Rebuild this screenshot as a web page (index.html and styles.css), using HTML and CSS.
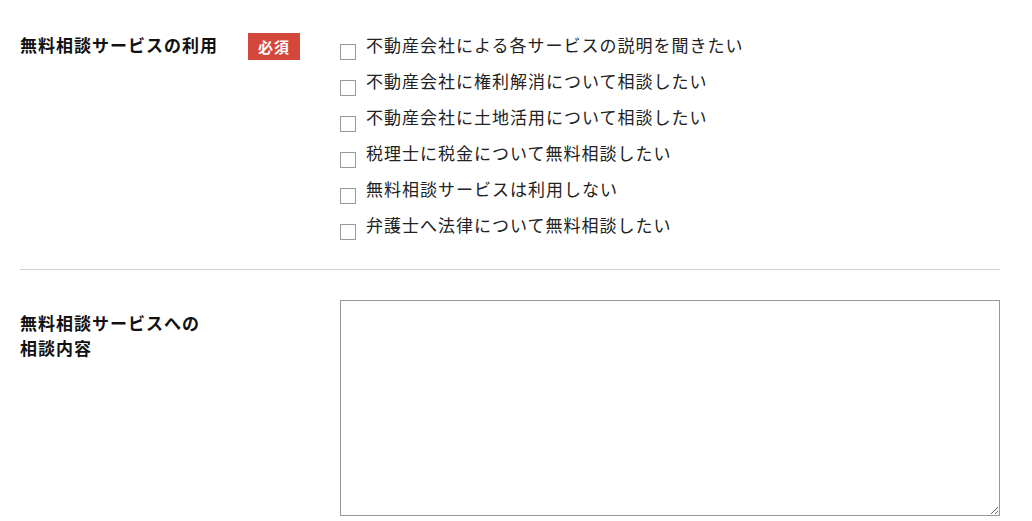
FILE: index.html
```html
<!DOCTYPE html>
<html lang="ja">
<head>
  <meta charset="UTF-8" />
  <meta name="viewport" content="width=device-width, initial-scale=1.0"/>
  <title>無料相談サービス</title>
  <link rel="stylesheet" href="styles.css">
</head>
<body>
  <form class="form">
    <div class="row row-first">
      <div class="label">無料相談サービスの利用</div>
      <span class="required">必須</span>
      <div class="options">
        <label class="option"><input type="checkbox" /><span>不動産会社による各サービスの説明を聞きたい</span></label>
        <label class="option"><input type="checkbox" /><span>不動産会社に権利解消について相談したい</span></label>
        <label class="option"><input type="checkbox" /><span>不動産会社に土地活用について相談したい</span></label>
        <label class="option"><input type="checkbox" /><span>税理士に税金について無料相談したい</span></label>
        <label class="option"><input type="checkbox" /><span>無料相談サービスは利用しない</span></label>
        <label class="option"><input type="checkbox" /><span>弁護士へ法律について無料相談したい</span></label>
      </div>
    </div>

    <div class="row row-second">
      <div class="label label-wide">無料相談サービスへの<br/>相談内容</div>
      <textarea class="message"></textarea>
    </div>
  </form>
</body>
</html>
```

FILE: styles.css
```css
body { margin: 0; background: #fff; color: #222; font-family: "Noto Sans CJK JP", "Noto Sans", sans-serif; font-size: 17px; }
.form { margin: 0 32px 0 20px; }
.row { display: flex; align-items: flex-start; }
.row-first { padding: 33px 0 20px; border-bottom: 1px solid #d0d0d0; }
.row-second { padding-top: 30px; }
.label { width: 228px; font-weight: bold; line-height: 24px; color: #111; letter-spacing: 1px; }
.label-wide { width: 320px; margin-top: 10px; line-height: 25px; }
.required { width: 52px; height: 27px; margin-right: 40px; background: #d4473b; color: #fff; font-size: 15px; font-weight: bold; line-height: 27px; text-align: center; letter-spacing: 1px; }
.options { display: flex; flex-direction: column; }
.option { display: flex; align-items: flex-start; height: 24px; line-height: 24px; margin-bottom: 12px; letter-spacing: 1px; cursor: pointer; }
.option input { appearance: none; -webkit-appearance: none; flex: none; width: 16px; height: 16px; margin: 11px 10px 0 0; border: 1px solid #9a9a9a; border-radius: 0; background: #fff; }
.message { width: 660px; height: 216px; box-sizing: border-box; margin: 0; border: 1px solid #999; border-radius: 0; padding: 6px; font-family: inherit; font-size: 16px; }
```
